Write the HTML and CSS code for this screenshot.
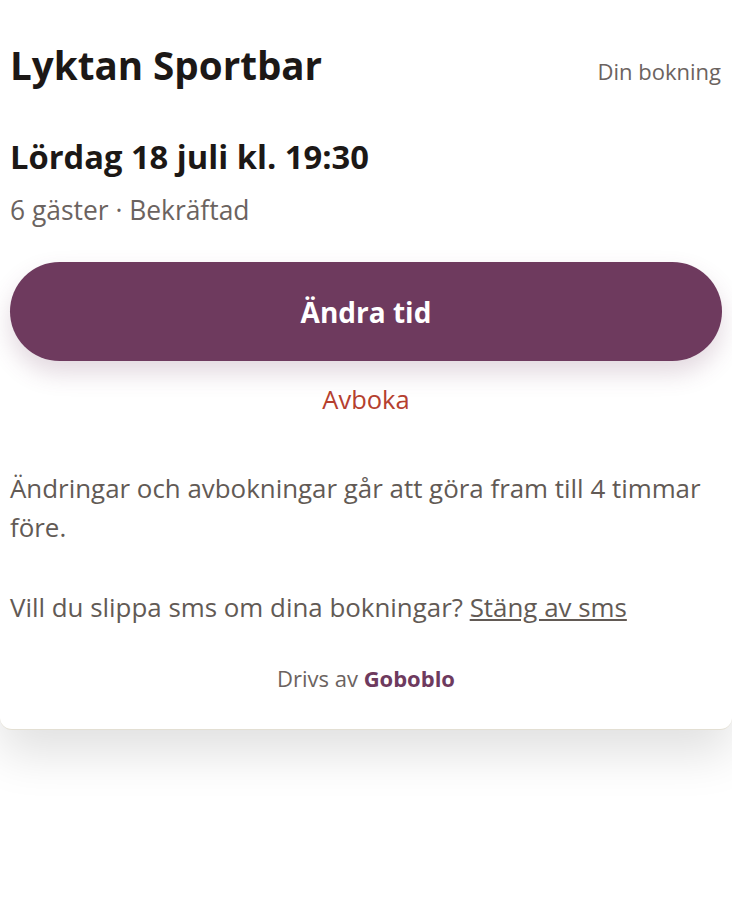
FILE: index.html
```html
<!DOCTYPE html>
<html lang="sv">
<head>
    <meta charset="UTF-8">
    <meta name="viewport" content="width=device-width, initial-scale=1.0">
    <title>Din bokning - Lyktan Sportbar</title>
    <link rel="stylesheet" href="styles.css">
</head>
<body>

<div class="card">
    <div class="header">
        <h1>Lyktan Sportbar</h1>
        <span class="label">Din bokning</span>
    </div>

    <h2 class="when">Lördag 18 juli kl. 19:30</h2>
    <p class="meta">6 gäster · Bekräftad</p>

    <button class="btn">Ändra tid</button>
    <a class="cancel" href="#">Avboka</a>

    <p class="info">Ändringar och avbokningar går att göra fram till 4 timmar före.</p>
    <p class="info">Vill du slippa sms om dina bokningar? <a href="#">Stäng av sms</a></p>

    <div class="footer">Drivs av <b>Goboblo</b></div>
</div>

</body>
</html>
```

FILE: styles.css
```css
body {
    font-family: "Open Sans", sans-serif;
    background-color: #fff;
    margin: 0;
    padding: 0;
    min-height: 100vh;
}
.card {
    position: relative;
    background-color: #fff;
    padding: 39px 10px 36px 10px;
    border-bottom: 1px solid #e3dfd3;
    border-radius: 0 0 12px 12px;
    box-shadow: 0 24px 48px rgba(0, 0, 0, 0.12);
}
.header {
    display: flex;
    justify-content: space-between;
    align-items: baseline;
    padding-right: 1px;
}
h1 {
    margin: 0;
    font-size: 38.6px;
    line-height: 52px;
    font-weight: 700;
    color: #1c1816;
}
.label {
    font-size: 22px;
    color: #6b6360;
}
.when {
    margin: 44px 0 0 0;
    font-size: 32.7px;
    line-height: 44px;
    font-weight: 700;
    color: #1c1816;
}
.meta {
    margin: 13px 0 0 0;
    font-size: 26.4px;
    line-height: 36px;
    color: #6b6360;
}
.btn {
    display: block;
    width: 100%;
    height: 99px;
    margin-top: 34px;
    background-color: #6e3a5e;
    color: #fff;
    border: none;
    border-radius: 50px;
    font-family: inherit;
    font-size: 28px;
    font-weight: 700;
    box-shadow: 0 12px 24px rgba(110, 58, 94, 0.2);
    cursor: pointer;
}
.cancel {
    display: block;
    margin-top: 20px;
    text-align: center;
    font-size: 25.5px;
    line-height: 36px;
    color: #b5402f;
    text-decoration: none;
}
.info {
    margin: 52px 0 0 0;
    font-size: 25.9px;
    line-height: 39px;
    color: #625a55;
}
.info + .info {
    margin-top: 41px;
}
.info a {
    color: #625a55;
}
.footer {
    margin-top: 36px;
    text-align: center;
    font-size: 22px;
    line-height: 30px;
    color: #6b6360;
}
.footer b {
    color: #6e3a5e;
}
```
